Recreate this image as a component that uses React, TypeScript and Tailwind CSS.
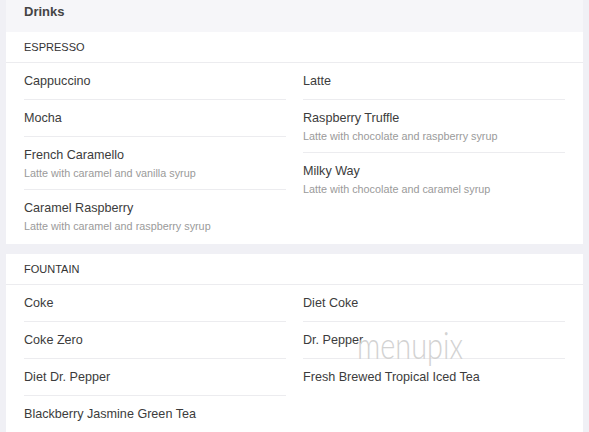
import React from "react";

type Item = { name: string; desc?: string };

const espressoLeft: Item[] = [
  { name: "Cappuccino" },
  { name: "Mocha" },
  { name: "French Caramello", desc: "Latte with caramel and vanilla syrup" },
  { name: "Caramel Raspberry", desc: "Latte with caramel and raspberry syrup" },
];

const espressoRight: Item[] = [
  { name: "Latte" },
  { name: "Raspberry Truffle", desc: "Latte with chocolate and raspberry syrup" },
  { name: "Milky Way", desc: "Latte with chocolate and caramel syrup" },
];

const fountainLeft: Item[] = [
  { name: "Coke" },
  { name: "Coke Zero" },
  { name: "Diet Dr. Pepper" },
  { name: "Blackberry Jasmine Green Tea" },
];

const fountainRight: Item[] = [
  { name: "Diet Coke" },
  { name: "Dr. Pepper" },
  { name: "Fresh Brewed Tropical Iced Tea" },
];

const Column = ({ items }: { items: Item[] }) => (
  <div className="flex flex-col">
    {items.map((item, i) => (
      <div
        key={item.name}
        className={`pt-[10px] ${item.desc ? "pb-[8px]" : "pb-[10px]"} ${
          i < items.length - 1 ? "border-b border-[#ececef]" : ""
        }`}
      >
        <div className="text-[12.6px] leading-[16px] text-[#3c3c3c]">{item.name}</div>
        {item.desc && (
          <div className="mt-[2px] text-[10.8px] leading-[16px] text-[#9a9a9a]">{item.desc}</div>
        )}
      </div>
    ))}
  </div>
);

const Section = ({ title, left, right }: { title: string; left: Item[]; right: Item[] }) => (
  <div className="bg-white">
    <div className="h-[31px] flex items-center px-[18px] border-b border-[#ececef] text-[11px] text-[#333]">
      {title}
    </div>
    <div className="grid grid-cols-[262px_262px] gap-x-[17px] pl-[18px] pb-[2px]">
      <Column items={left} />
      <Column items={right} />
    </div>
  </div>
);

export default function App() {
  return (
    <div
      className="relative w-[589px] h-[432px] overflow-hidden bg-[#f0f0f5]"
      style={{ fontFamily: '"Liberation Sans", Arial, sans-serif' }}
    >
      <div className="mx-[6px] flex flex-col">
        <div className="h-[32px] px-[18px] pt-[4px] leading-[16px] bg-[#f6f6f9] text-[13px] font-bold text-[#444]">
          Drinks
        </div>
        <Section title="ESPRESSO" left={espressoLeft} right={espressoRight} />
        <div className="h-[10px]" />
        <Section title="FOUNTAIN" left={fountainLeft} right={fountainRight} />
      </div>
      <div
        className="absolute left-[357px] top-[325px] origin-left scale-x-[0.76] text-[38px] leading-[38px] font-light text-[#d2d2d2] pointer-events-none"
        style={{ fontFamily: "Lato, sans-serif" }}
      >
        menupix
      </div>
    </div>
  );
}
